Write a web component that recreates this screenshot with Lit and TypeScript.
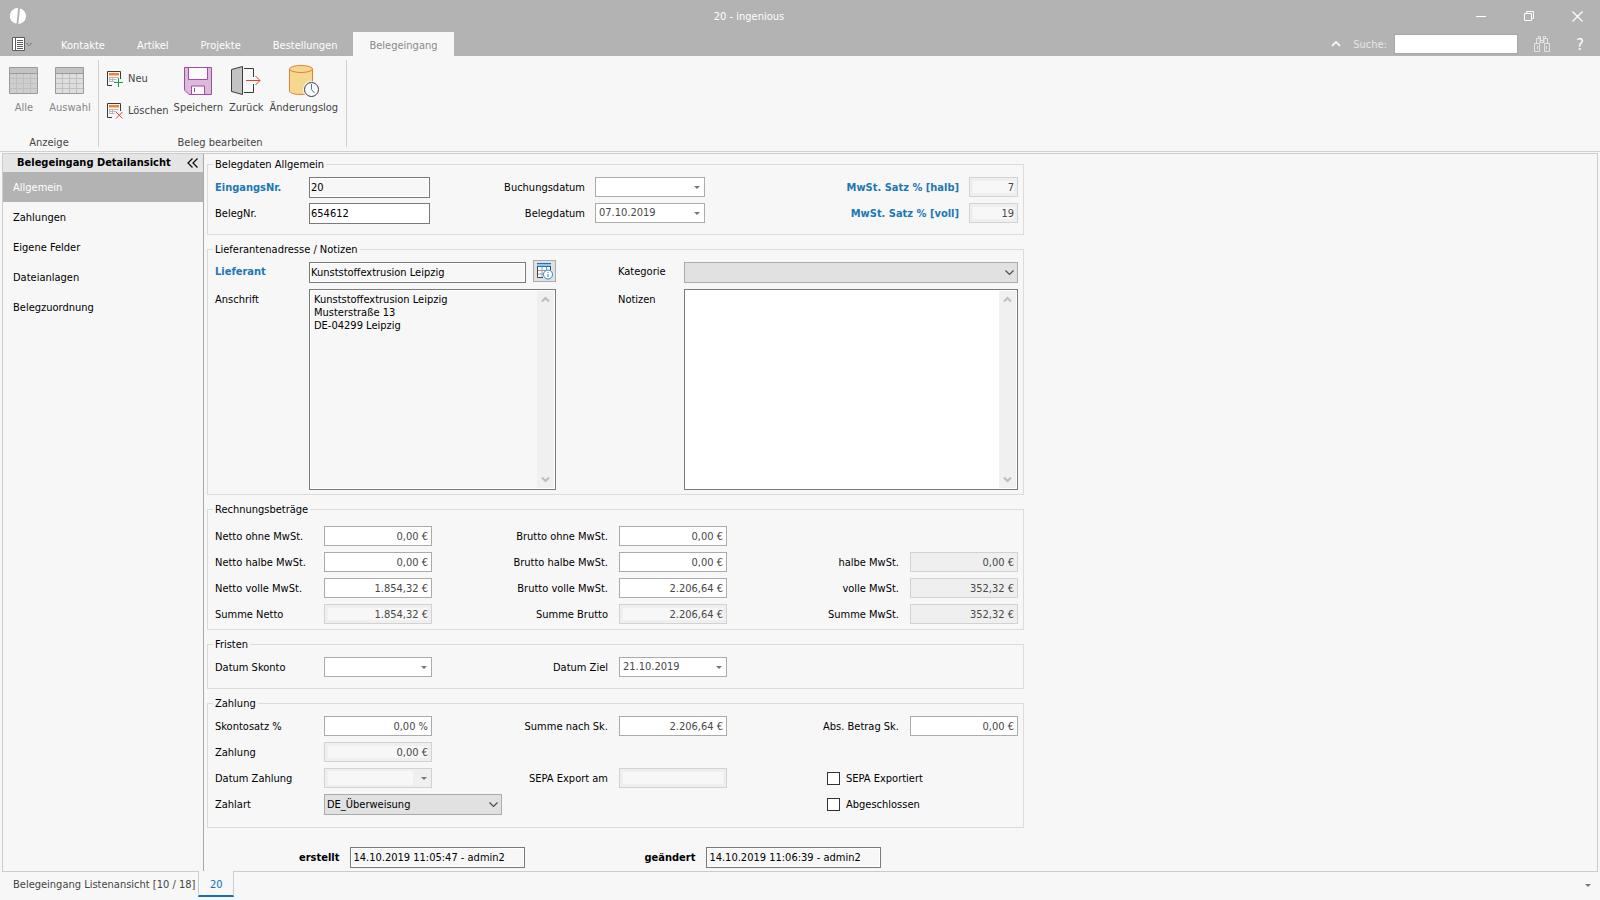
import { LitElement, html, css, svg, nothing } from "lit";
import { customElement } from "lit/decorators.js";
import { classMap } from "lit/directives/class-map.js";

const icon = (w: number, h: number, body: unknown) =>
  html`<svg class="icon" width=${w} height=${h} viewBox="0 0 ${w} ${h}" fill="none" aria-hidden="true">${body}</svg>`;

const logo = icon(16, 16, svg`
  <path d="M7.400 0A8 8 0 0 0 5.400 15.600L6.600 15L8 .2Z" fill="#fff"/>
  <path d="M10.400.4A8 8 0 0 1 8.600 16L8.400 15.800L9.900 1Z" fill="#fff"/>`);

const menuIcon = icon(22, 16, svg`
  <path d="M.5 1.500h12v13H.5z" fill="#fff" stroke="#5e5e5e"/>
  <path d="M3.500 2v12M5 4.500h6M5 6.500h6M5 8.500h6M5 10.500h6M5 12.500h6" stroke="#5e5e5e"/>
  <path d="M14.500 7.500l2.500 2.500 2.500-2.500M14.500 7.500h1.500M18 7.500h1.500" stroke="#858585"/>`);

const tableIcon = (cell: string) => icon(30, 30, svg`
  <path d="M.5 1.500h28v26H.5z" fill="${cell}"/>
  <path d="M1 2h27v5H1z" fill="#c3c3c3"/>
  <path d="M1 12.500h27M1 17.500h27M1 22.500h27M7.500 8v19M14.500 8v19M21.500 8v19" stroke="#bfbfbf"/>
  <path d="M1 7.500h27M.5 1.500h28v26H.5z" stroke="#9a9a9a"/>`);

const form = svg`
  <path d="M5 14.500H.5V.5h13V8" stroke="#3b3b3b"/>
  <path d="M2 2h10v2.500H2z" fill="#ee8434"/>
  <path d="M2.500 6.500h9M2.500 8.500h7M2.500 10.500h5M2.500 6v5M5.500 6v5" stroke="#b9b9b9"/>`;
const newIcon = icon(16, 16, svg`${form}<path d="M11.500 7v9M7 11.500h9" stroke="#16a34f"/>`);
const deleteIcon = icon(16, 16, svg`${form}<path d="M9 9l6.500 6.500M15.500 9L9 15.500" stroke="#ee3e36"/>`);

const saveIcon = icon(28, 28, svg`
  <path d="M.5.5h27v27H5l-4.500-4.500z" fill="#dcbadb" stroke="#a14ba3"/>
  <path d="M4.500.500h19v12h-19z" fill="#fafafa" stroke="#a14ba3"/>
  <path d="M7.500 27.500v-8.500h13v8.500z" fill="#fafafa" stroke="#a14ba3"/>
  <path d="M10.500 21v4" stroke="#a14ba3"/>`);

const backIcon = icon(30, 30, svg`
  <path d="M13 2.500h9.500V11M22.500 18v8.500H13" stroke="#3b3b3b"/>
  <path d="M.500 3.500L11.500.500v28L.500 25.500z" fill="#c4c3c2" stroke="#3b3b3b"/>
  <path d="M15 14.500h14M24.500 10l4.500 4.500L24.500 19" stroke="#ee3e36"/>`);

const logIcon = icon(30, 32, svg`
  <path d="M.500 4v22c0 2.200 5 3.500 11.500 3.500S23.500 28.200 23.500 26V4z" fill="#f5d78f" stroke="#e2803a"/>
  <ellipse cx="12" cy="4" rx="11.500" ry="3.500" fill="#f5d78f" stroke="#e2803a"/>
  <circle cx="22.500" cy="24.500" r="8.500" fill="#f7f7f7"/>
  <circle cx="22.500" cy="24.500" r="7" fill="#fbfbfb" stroke="#3b3b3b"/>
  <path d="M22.500 19v5.500l3 3.500" stroke="#1d86c8"/>`);

const minIcon = icon(10, 10, svg`<path d="M0 5.500h10" stroke="#fff"/>`);
const restoreIcon = icon(10, 10, svg`<path d="M.5 2.500h7v7h-7zM2.500 2.500V.5h7v7h-2" stroke="#fff"/>`);
const closeIcon = icon(11, 11, svg`<path d="M.5.5l10 10M10.500.5L.5 10.500" stroke="#fff" stroke-width="1.200"/>`);
const upIcon = icon(10, 8, svg`<path d="M1 6l4-4 4 4" stroke="#fff" stroke-width="1.600"/>`);
const findIcon = icon(16, 16, svg`
  <path d="M.5 7.500h5v8h-5zM10.500 7.500h5v8h-5zM2.500 7V2.500h3.500v4.500M10 7V2.500h3.500v4.500M4.500 2V.500h2V7M11.500 2V.500h-2V7M6.500 4.500h3M6.500 6.500h3M3.500 10v3M12.500 10v3" stroke="#e4e4e4"/>`);
const collapseIcon = icon(12, 10, svg`<path d="M5.500.5L1 5l4.500 4.500M10.500.5L6 5l4.500 4.500" stroke="#111" stroke-width="1.300"/>`);
const lookupIcon = icon(16, 18, svg`
  <path d="M.5 1.500h13v14H.5z" fill="#fff"/>
  <path d="M1 8.500h12M1 12h6M5 5v10M9.500 5v5" stroke="#9b9b9b"/>
  <path d="M13.500 8V1.500M.5 1.500V15.500H6" stroke="#444"/>
  <path d="M0 1h14v4H0z" fill="#8cc8ee"/><path d="M0 1.500h14M0 4.500h14" stroke="#1874b4"/>
  <circle cx="11" cy="12.500" r="4.500" fill="#fff" stroke="#1d86c8"/>
  <path d="M11 12v3M11 10v1" stroke="#1d86c8"/>`);
const chevron = icon(9, 6, svg`<path d="M.5.5l4 4 4-4" stroke="#4c4c4c" stroke-width="1.200"/>`);
const triangle = icon(6, 3, svg`<path d="M0 0h6l-3 3z" fill="#777"/>`);
const scrollUp = icon(9, 7, svg`<path d="M1 5.500L4.500 2 8 5.500" stroke="#bdbdbd" stroke-width="2"/>`);
const scrollDown = icon(9, 7, svg`<path d="M1 1.500L4.500 5 8 1.500" stroke="#bdbdbd" stroke-width="2"/>`);

type Kind = "plain" | "plain-ro" | "edit" | "off" | "flat";

@customElement("app-root")
export class AppRoot extends LitElement {
  static styles = css`
    :host {
      display: flex;
      flex-direction: column;
      min-height: 100vh;
      background: #f7f7f7;
      color: #000;
      font: 11px/14px "DejaVu Sans Condensed", "DejaVu Sans", sans-serif;
    }
    *, *::before, *::after { box-sizing: border-box; }
    button, input, select, textarea { font: inherit; color: inherit; margin: 0; border-radius: 0; outline: none; }
    button { background: none; border: 0; padding: 0; }
    a { color: inherit; text-decoration: none; }
    .icon { display: block; flex: none; }

    .titlebar { display: flex; align-items: center; height: 32px; padding-left: 10px; background: #b3b3b3; color: #fff; }
    .title { flex: 1; margin: 0; padding: 2px 0 0 14px; font-size: 11px; font-weight: 400; text-align: center; }
    .window { display: flex; gap: 2px; }
    .window button { display: grid; place-items: center; width: 46px; height: 32px; }

    .tabs { display: flex; align-items: stretch; height: 24px; background: #b3b3b3; color: #fff; }
    .menu { display: grid; place-items: center; padding: 0 11px 0 12px; }
    .tab { display: flex; align-items: center; padding: 4px 16px 0; }
    .tab.active { background: #f7f7f7; color: #8a8a8a; }
    .search { display: flex; align-items: center; margin-left: auto; padding-right: 14px; }
    .search label { padding: 2px 7px 0 12px; color: #e6e6e6; }
    .search input { width: 124px; height: 20px; border: 1px solid #a8a8a8; background: #fff; color: #333; padding: 0 4px; margin-right: 16px; }
    .help { margin-left: 24px; padding-top: 2px; width: 12px; font-size: 16px; line-height: 20px; }

    .ribbon { display: flex; height: 96px; border-bottom: 1px solid #cfcfcf; color: #444; padding-top: 4px; }
    .group { display: flex; flex-direction: column; justify-content: space-between; height: 87px; border-right: 1px solid #cfcfcf; }
    .tools { display: flex; align-items: flex-start; }
    .caption { text-align: center; line-height: 8px; }
    .big { display: flex; flex-direction: column; align-items: center; padding: 5px 3px 0; }
    .big .pic { display: grid; place-items: center; height: 32px; margin-bottom: 4px; }
    .big.muted { color: #868686; }
    .view { padding: 0 5px 0 1px; }
    .view .big { width: 46px; padding: 5px 0 0; }
    .small { display: flex; flex-direction: column; gap: 16px; padding: 11px 2px 0 8px; }
    .small button { display: flex; align-items: center; gap: 5px; height: 16px; }
    .edit-group { padding-right: 5px; }

    .panel { flex: 1; display: flex; margin: 1px 2px 0; border: 1px solid #cccccc; }
    .side { width: 201px; flex: none; border-right: 1px solid #a9a9a9; }
    .side h2 { display: flex; justify-content: space-between; align-items: center; height: 18px; margin: 0; padding: 0 4px 0 14px; background: #e5e5e5; font-size: 11px; }
    .side a { display: block; padding: 9px 10px 7px; }
    .side a.active { background: #b3b3b3; color: #fff; }

    .content { flex: 1; min-width: 0; padding: 2px 3px 3px; }
    form { max-width: 817px; }
    fieldset { min-width: 0; margin: 0 0 6px; border: 1px solid #dcdcdc; padding: 0 5px; }
    legend { padding: 2px 2px 0; }
    .grid { display: grid; grid-auto-rows: 21px; row-gap: 5px; padding-left: 2px; align-items: start; }
    .head { grid-template-columns: 94px 121px 165px 110px 1fr 49px; padding-top: 5px; padding-bottom: 10px; }
    .address { grid-template-columns: 94px 247px 1fr 334px; grid-auto-rows: auto; row-gap: 6px; padding-top: 3px; padding-bottom: 4px; }
    .sums { grid-template-columns: 109px 108px 187px 108px 1fr 108px; padding-top: 5px; }
    .amounts { padding-top: 9px; padding-bottom: 4px; }
    .terms { padding-bottom: 10px; }
    .payment { padding-bottom: 12px; }
    .grid > label { line-height: 22px; }
    .grid > .right { text-align: right; padding-right: 11px; }
    .grid > .key { font-weight: 700; color: #2078b4; }
    .head > .right { padding-right: 10px; }
    .address > label { padding-top: 1px; }
    .address > .mid { padding-left: 62px; }
    .grid > .area-label { line-height: 14px; padding-top: 4px; }

    .field { width: 100%; height: 20px; border: 1px solid #ababab; background: #fff; color: #484848; padding: 0 3px; text-align: right; }
    .field.plain, .field.plain-ro { height: 21px; border-color: #7a7a7a; color: #000; padding: 0 1px; text-align: left; }
    .field.plain-ro { background: #f7f7f7; box-shadow: inset 0 0 0 1px #fff; }
    .field.off { background: #f7f7f7; border-color: #d2d2d2; box-shadow: inset 0 0 0 3px #efefef; }
    .field.flat { background: #efefef; border-color: #d2d2d2; }

    .date { display: flex; height: 20px; border: 1px solid #ababab; background: #fff; color: #484848; }
    .date input { flex: 1; min-width: 0; border: 0; background: none; padding: 0 3px; }
    .date button { display: grid; place-items: center; width: 15px; }
    .date.off { border-color: #d2d2d2; background: #efefef; }
    .date.off input { background: #f7f7f7; margin: 2px 3px; }

    .choice { display: grid; align-items: center; justify-items: end; }
    .choice select { grid-area: 1 / 1; appearance: none; width: 100%; height: 21px; border: 1px solid #ababab; background: #e1e1e1; padding: 0 2px; }
    .choice .icon { grid-area: 1 / 1; margin-right: 4px; pointer-events: none; }
    .address .choice, .supplier .field { margin-top: 2px; }
    .payment .choice { grid-column: span 2; width: 178px; }

    .supplier { display: flex; gap: 7px; }
    .supplier .field { flex: 1; min-width: 0; }
    .supplier button { display: grid; place-items: center; width: 23px; height: 22px; border: 1px solid #ababab; background: #e1e1e1; }

    .area { display: flex; height: 201px; border: 1px solid #7a7a7a; background: #fff; padding: 1px; }
    .area textarea { flex: 1; min-width: 0; resize: none; border: 0; padding: 2px 3px; line-height: 13px; background: #fff; overflow: hidden; }
    .area.locked textarea { background: #f7f7f7; }
    .bar { display: flex; flex-direction: column; justify-content: space-between; width: 17px; background: #f0f0f0; }
    .bar button { display: grid; place-items: center; height: 17px; }

    .check { display: flex; align-items: center; gap: 6px; height: 21px; grid-column: 5 / span 2; padding-left: 100px; }
    .check input { appearance: none; width: 13px; height: 13px; border: 1px solid #333; background: #fff; }
    .wide { grid-column: span 4; }

    .stamps { display: flex; align-items: center; padding: 13px 0 0 92px; gap: 11px; font-weight: 700; }
    .stamps .field { width: 175px; font-weight: 400; padding: 0 2px; }
    .stamps label + .field + label { padding-left: 108px; }

    .status { display: flex; height: 28px; color: #444; padding: 0 9px 0 2px; }
    .status a { display: flex; align-items: center; padding: 0 3px 3px 11px; }
    .status a.active { position: relative; margin-top: -1px; height: 26px; width: 36px; justify-content: center; padding: 3px 0 0; border: 1px solid #cccccc; border-width: 0 1px 2px; border-bottom-color: #106ebe; background: #f7f7f7; color: #106ebe; }
    .status button { margin-left: auto; height: 26px; }
  `;

  private input(id: string, value = "", kind: Kind = "edit") {
    return html`<input id=${id} class="field ${kind}" .value=${value} ?readonly=${kind === "off" || kind === "flat" || kind === "plain-ro"} />`;
  }

  private date(id: string, value = "", off = false) {
    return html`<div class=${classMap({ date: true, off })}>
      <input id=${id} .value=${value} ?readonly=${off} />
      <button type="button" aria-label="Kalender öffnen">${triangle}</button>
    </div>`;
  }

  private label(id: string, text: string, cls = "") {
    return html`<label for=${id} class=${cls || nothing}>${text}</label>`;
  }

  private area(id: string, value: string, locked: boolean) {
    return html`<div class=${classMap({ area: true, locked })}>
      <textarea id=${id} .value=${value} ?readonly=${locked}></textarea>
      <div class="bar">
        <button type="button" aria-label="Nach oben">${scrollUp}</button>
        <button type="button" aria-label="Nach unten">${scrollDown}</button>
      </div>
    </div>`;
  }

  private big(text: string, pic: unknown, muted = false) {
    return html`<button class=${classMap({ big: true, muted })}><span class="pic">${pic}</span>${text}</button>`;
  }

  render() {
    return html`
      <header class="titlebar">
        ${logo}
        <h1 class="title">20 - ingenious</h1>
        <div class="window">
          <button aria-label="Minimieren">${minIcon}</button>
          <button aria-label="Verkleinern">${restoreIcon}</button>
          <button aria-label="Schließen">${closeIcon}</button>
        </div>
      </header>

      <nav class="tabs">
        <button class="menu" aria-label="Menü">${menuIcon}</button>
        ${["Kontakte", "Artikel", "Projekte", "Bestellungen", "Belegeingang"].map(
          (t) => html`<a href="#" class=${classMap({ tab: true, active: t === "Belegeingang" })}>${t}</a>`
        )}
        <div class="search">
          <button aria-label="Menüband einklappen">${upIcon}</button>
          <label for="search">Suche:</label>
          <input id="search" />
          <button aria-label="Suchen">${findIcon}</button>
          <button class="help">?</button>
        </div>
      </nav>

      <section class="ribbon">
        <div class="group">
          <div class="tools view">${this.big("Alle", tableIcon("#cecece"), true)}${this.big("Auswahl", tableIcon("#dedede"), true)}</div>
          <div class="caption">Anzeige</div>
        </div>
        <div class="group edit-group">
          <div class="tools">
            <div class="small">
              <button>${newIcon}Neu</button>
              <button>${deleteIcon}Löschen</button>
            </div>
            ${this.big("Speichern", saveIcon)}${this.big("Zurück", backIcon)}${this.big("Änderungslog", logIcon)}
          </div>
          <div class="caption">Beleg bearbeiten</div>
        </div>
      </section>

      <main class="panel">
        <nav class="side">
          <h2>Belegeingang Detailansicht<button aria-label="Einklappen">${collapseIcon}</button></h2>
          ${["Allgemein", "Zahlungen", "Eigene Felder", "Dateianlagen", "Belegzuordnung"].map(
            (t, i) => html`<a href="#" class=${i === 0 ? "active" : ""}>${t}</a>`
          )}
        </nav>
        <div class="content">
          <form>
            <fieldset>
              <legend>Belegdaten Allgemein</legend>
              <div class="grid head">
                ${this.label("nr", "EingangsNr.", "key")}${this.input("nr", "20", "plain-ro")}
                ${this.label("booking", "Buchungsdatum", "right")}${this.date("booking")}
                ${this.label("half", "MwSt. Satz % [halb]", "key right")}${this.input("half", "7", "off")}
                ${this.label("doc", "BelegNr.")}${this.input("doc", "654612", "plain")}
                ${this.label("docdate", "Belegdatum", "right")}${this.date("docdate", "07.10.2019")}
                ${this.label("full", "MwSt. Satz % [voll]", "key right")}${this.input("full", "19", "off")}
              </div>
            </fieldset>

            <fieldset>
              <legend>Lieferantenadresse / Notizen</legend>
              <div class="grid address">
                ${this.label("supplier", "Lieferant", "key")}
                <div class="supplier">
                  ${this.input("supplier", "Kunststoffextrusion Leipzig", "plain-ro")}
                  <button type="button" aria-label="Lieferant anzeigen">${lookupIcon}</button>
                </div>
                ${this.label("category", "Kategorie", "mid")}
                <div class="choice"><select id="category"><option></option></select>${chevron}</div>
                ${this.label("address", "Anschrift", "area-label")}
                ${this.area("address", "Kunststoffextrusion Leipzig\nMusterstraße 13\nDE-04299 Leipzig", true)}
                ${this.label("notes", "Notizen", "mid area-label")}
                ${this.area("notes", "", false)}
              </div>
            </fieldset>

            <fieldset>
              <legend>Rechnungsbeträge</legend>
              <div class="grid sums amounts">
                ${this.label("n0", "Netto ohne MwSt.")}${this.input("n0", "0,00 €")}
                ${this.label("b0", "Brutto ohne MwSt.", "right")}${this.input("b0", "0,00 €")}
                <span></span><span></span>
                ${this.label("n1", "Netto halbe MwSt.")}${this.input("n1", "0,00 €")}
                ${this.label("b1", "Brutto halbe MwSt.", "right")}${this.input("b1", "0,00 €")}
                ${this.label("m1", "halbe MwSt.", "right")}${this.input("m1", "0,00 €", "flat")}
                ${this.label("n2", "Netto volle MwSt.")}${this.input("n2", "1.854,32 €")}
                ${this.label("b2", "Brutto volle MwSt.", "right")}${this.input("b2", "2.206,64 €")}
                ${this.label("m2", "volle MwSt.", "right")}${this.input("m2", "352,32 €", "flat")}
                ${this.label("n3", "Summe Netto")}${this.input("n3", "1.854,32 €", "off")}
                ${this.label("b3", "Summe Brutto", "right")}${this.input("b3", "2.206,64 €", "off")}
                ${this.label("m3", "Summe MwSt.", "right")}${this.input("m3", "352,32 €", "flat")}
              </div>
            </fieldset>

            <fieldset>
              <legend>Fristen</legend>
              <div class="grid sums terms">
                ${this.label("discountdate", "Datum Skonto")}${this.date("discountdate")}
                ${this.label("due", "Datum Ziel", "right")}${this.date("due", "21.10.2019")}
              </div>
            </fieldset>

            <fieldset>
              <legend>Zahlung</legend>
              <div class="grid sums payment">
                ${this.label("rate", "Skontosatz %")}${this.input("rate", "0,00 %")}
                ${this.label("after", "Summe nach Sk.", "right")}${this.input("after", "2.206,64 €")}
                ${this.label("abs", "Abs. Betrag Sk.", "right")}${this.input("abs", "0,00 €")}
                ${this.label("paid", "Zahlung")}${this.input("paid", "0,00 €", "off")}
                <span class="wide"></span>
                ${this.label("paydate", "Datum Zahlung")}${this.date("paydate", "", true)}
                ${this.label("sepa", "SEPA Export am", "right")}${this.input("sepa", "", "off")}
                <label class="check"><input type="checkbox" />SEPA Exportiert</label>
                ${this.label("method", "Zahlart")}
                <div class="choice"><select id="method"><option>DE_Überweisung</option></select>${chevron}</div>
                <label class="check"><input type="checkbox" />Abgeschlossen</label>
              </div>
            </fieldset>

            <div class="stamps">
              ${this.label("created", "erstellt")}${this.input("created", "14.10.2019 11:05:47 - admin2", "plain-ro")}
              ${this.label("changed", "geändert")}${this.input("changed", "14.10.2019 11:06:39 - admin2", "plain-ro")}
            </div>
          </form>
        </div>
      </main>

      <footer class="status">
        <a href="#">Belegeingang Listenansicht [10 / 18]</a>
        <a href="#" class="active">20</a>
        <button aria-label="Weitere Fenster">${triangle}</button>
      </footer>
    `;
  }
}
